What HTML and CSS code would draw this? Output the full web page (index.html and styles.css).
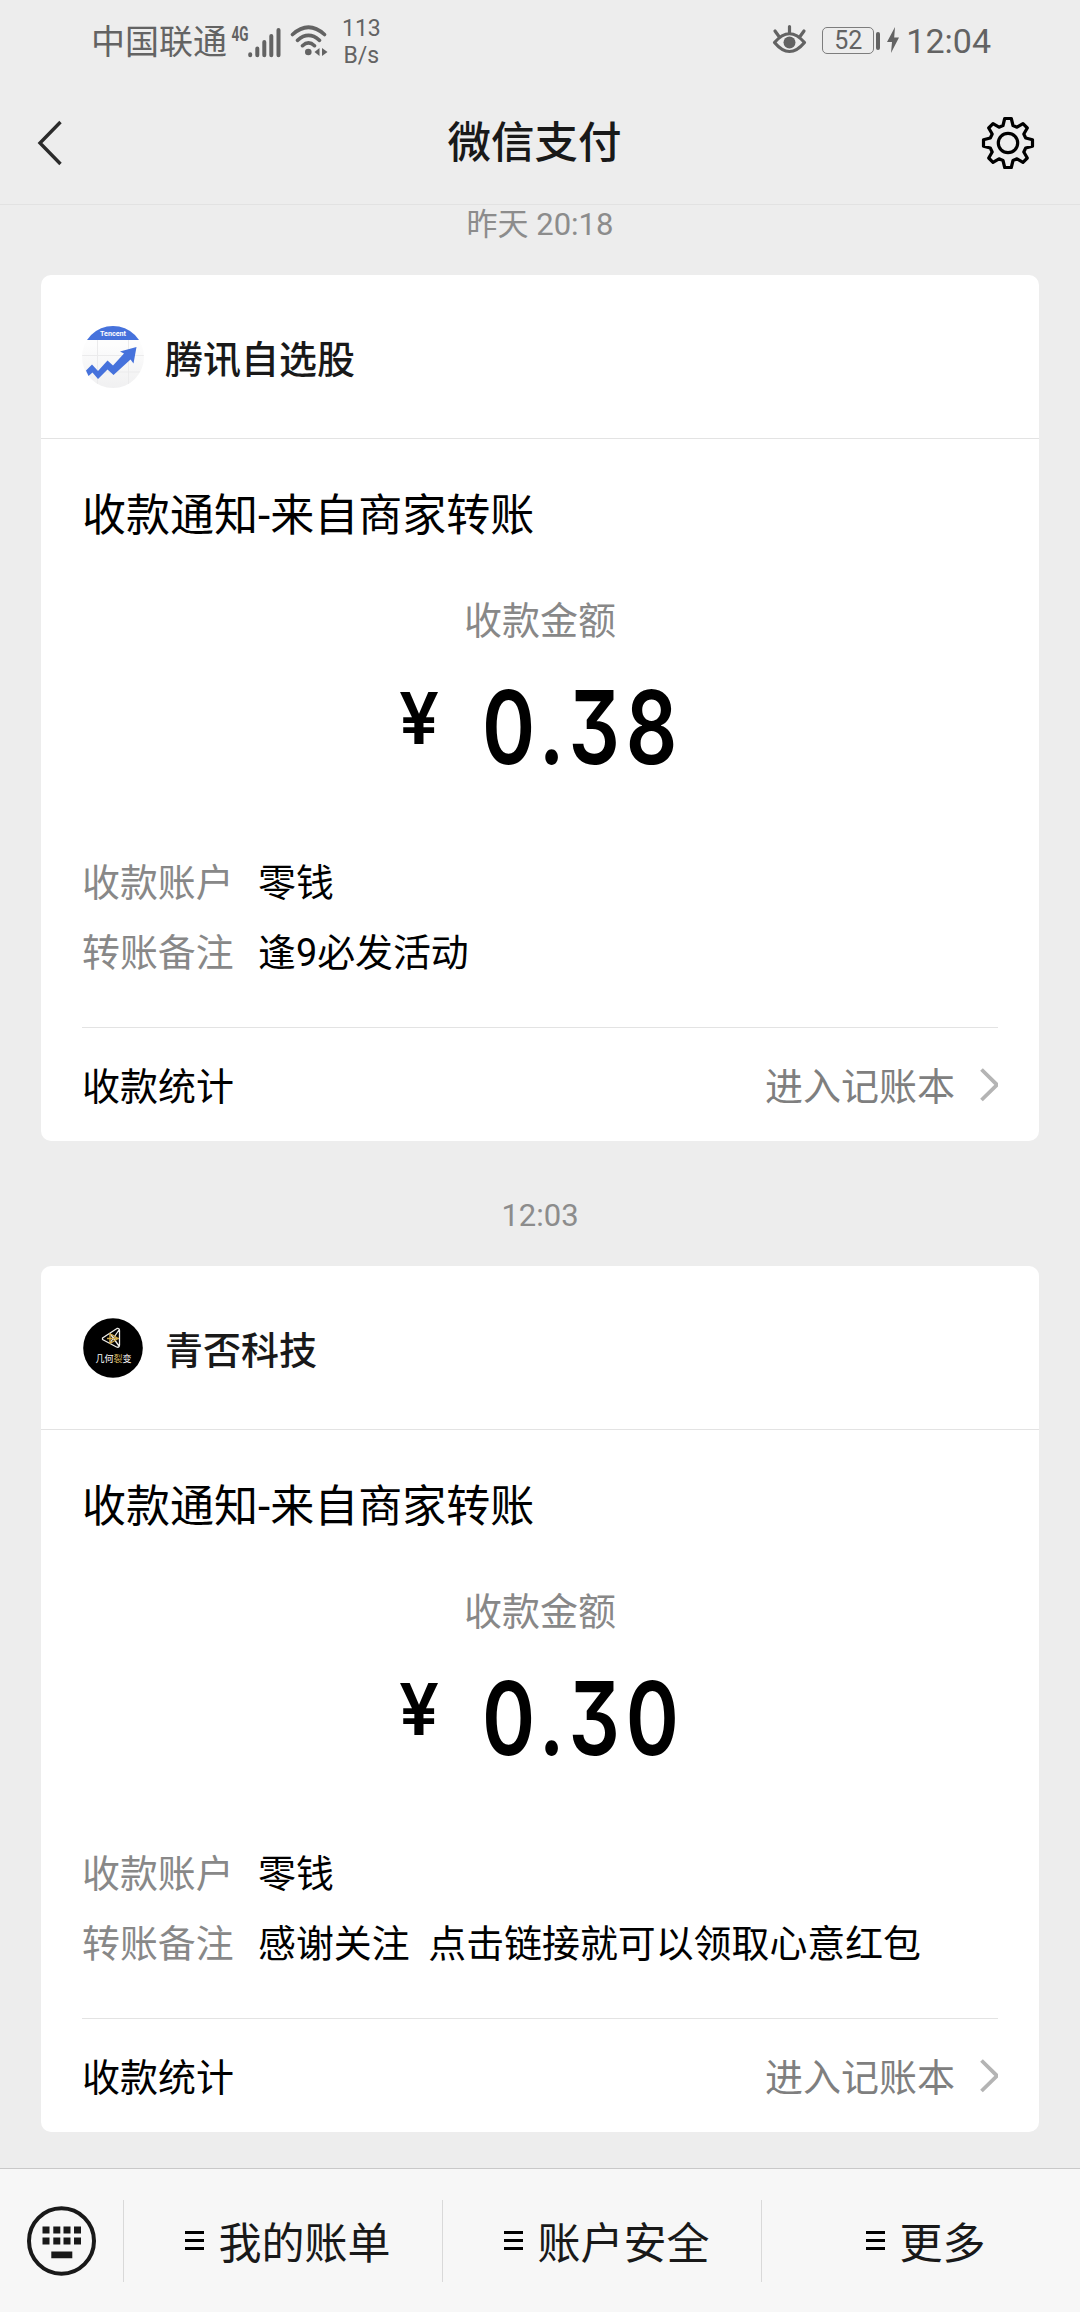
FILE: index.html
```html
<!DOCTYPE html>
<html lang="zh-CN">
<head>
<meta charset="utf-8">
<title>微信支付</title>
<link rel="stylesheet" href="styles.css">
</head>
<body>
<div class="screen">
  <div class="status">
    <span class="carrier">中国联通</span>
    <svg class="signal" width="50" height="46" viewBox="0 -6 50 46">
      <text x="0.500" y="16.500" class="net" textLength="17" lengthAdjust="spacingAndGlyphs">4G</text>
      <g stroke="#636363" stroke-width="4" stroke-linecap="round"><path d="M19.2 30.3v.9M26.3 24.5v6.7M33.3 18v13.2M40.3 12v19.2M47.5 6v25.2"/></g>
    </svg>
    <svg class="wifi" width="38" height="32" viewBox="0 0 38 32">
      <g fill="none" stroke="#636363" stroke-width="3.6" stroke-linecap="round"><path d="M2.5 9.5Q18.500-5 34.500 9.500M7.500 15.300Q18.500 5.500 29.500 15.300M12.500 20.700Q18.500 15 24.500 20.700"/></g>
      <circle cx="18.300" cy="27" r="3.300" fill="#636363"/>
      <path d="M29.500 23v8l-5-4zM32 23v8l5.500-4z" fill="#636363"/>
    </svg>
    <span class="speed">113<br>B/s</span>
    <span class="grow"></span>
    <svg class="eye" width="36" height="32" viewBox="0 0 36 32">
      <g fill="none" stroke="#636363" stroke-width="3.200" stroke-linecap="round" stroke-linejoin="round"><path d="M2.500 18.500Q17.500 1 32.500 18.500Q17.500 36.500 2.500 18.500zM17.500 2.500v6M3 7l4 5.500M32 7l-4 5.500"/></g>
      <circle cx="17.500" cy="18.500" r="6" fill="#636363"/>
    </svg>
    <span class="battery">52</span>
    <span class="tip"></span>
    <svg class="bolt" width="12" height="26" viewBox="0 0 12 26"><path d="M8 0L0 15h5L4 26 12 10.500H7.200z" fill="#636363"/></svg>
    <span class="clock">12:04</span>
  </div>
  <div class="nav">
    <svg width="26" height="46" viewBox="0 0 26 46"><path d="M23.500 2L3 23l20.500 21" fill="none" stroke="#2b2b2b" stroke-width="3.400"/></svg>
    <h1 class="nav-title">微信支付</h1>
    <svg width="56" height="56" viewBox="-28 -28 56 56" fill="none" stroke="#000" stroke-width="3.200" stroke-linejoin="round">
      <path d="M-24.500-3.300L-17.700-5L-15.800-9L-19.300-15L-15-19.300L-9-15.800L-5-17.500L-3.300-24.500H3.300L5-17.500L9-15.800L15-19.300L19.300-15L15.800-9L17.700-5L24.500-3.300V3.300L17.700 5L15.800 9L19.300 15L15 19.300L9 15.800L5 17.500L3.300 24.500H-3.300L-5 17.500L-9 15.800L-15 19.300L-19.300 15L-15.800 9L-17.700 5L-24.500 3.300z"/>
      <circle r="9.700"/>
    </svg>
  </div>

  <main class="chat">
    <div class="time">昨天 20:18</div>
    <section class="card">
      <header class="card-head">
        <svg class="avatar" width="62" height="62" viewBox="0 0 62 62">
          <defs>
            <clipPath id="disc"><circle cx="31" cy="31" r="31"/></clipPath>
            <linearGradient id="shade" x2="0" y2="1"><stop offset="0.300" stop-color="#fdfdfd"/><stop offset="1" stop-color="#f0f0f1"/></linearGradient>
          </defs>
          <g clip-path="url(#disc)">
            <rect width="62" height="62" fill="url(#shade)"/>
            <path d="M15.500 14v48M46.500 14v48M0 29.500h62M0 46h62" stroke="#ebebec"/>
            <rect width="62" height="14" fill="#4672dc"/>
            <text x="31" y="9.500" class="brand" textLength="26" lengthAdjust="spacingAndGlyphs">Tencent</text>
          </g>
          <path d="M4 44.500L10 38.500 16 45 25.500 34.500 31 39.500 42 27.500 38 25.500 54.500 21 51.500 37.500 48.500 33.500 31.500 49 25.500 43.500 16 53 10.500 46.500 6.500 50z" fill="#4672dc"/>
        </svg>
        <span class="name">腾讯自选股</span>
      </header>
      <div class="body">
        <h2 class="title">收款通知-来自商家转账</h2>
        <div class="label">收款金额</div>
        <div class="amount"><span class="yen">¥</span><span class="num">0.38</span></div>
        <dl class="rows">
          <dt>收款账户</dt><dd>零钱</dd>
          <dt>转账备注</dt><dd>逢9必发活动</dd>
        </dl>
        <footer class="foot">
          <span>收款统计</span>
          <span class="link">进入记账本</span>
          <svg width="18" height="34" viewBox="0 0 18 34"><path d="M1.500 1.500L17 16.800 1.500 32" fill="none" stroke="#b4b4b4" stroke-width="3.800"/></svg>
        </footer>
      </div>
    </section>

    <div class="time later">12:03</div>
    <section class="card">
      <header class="card-head">
        <svg class="avatar" width="62" height="62" viewBox="0 0 62 62">
          <circle cx="31" cy="31" r="29.800" fill="#000"/>
          <g fill="none" stroke="#efeeea" stroke-width="1.300" stroke-linejoin="round"><path d="M20.500 21L35 11.500Q37.500 11 37.500 13.500V28Q37.500 31 34.500 30L20.500 22.500zM28 16.500L37 29M28 26L37 13"/></g>
          <path d="M28 16v11M25 21.500h12M28 16.500l8 5-8 5" fill="none" stroke="#cfa94b" stroke-width="1.400"/>
          <text x="13.500" y="45" class="logo">几何<tspan fill="#d8b75c">裂</tspan>变</text>
        </svg>
        <span class="name">青否科技</span>
      </header>
      <div class="body">
        <h2 class="title">收款通知-来自商家转账</h2>
        <div class="label">收款金额</div>
        <div class="amount"><span class="yen">¥</span><span class="num">0.30</span></div>
        <dl class="rows">
          <dt>收款账户</dt><dd>零钱</dd>
          <dt>转账备注</dt><dd>感谢关注  点击链接就可以领取心意红包</dd>
        </dl>
        <footer class="foot">
          <span>收款统计</span>
          <span class="link">进入记账本</span>
          <svg width="18" height="34" viewBox="0 0 18 34"><path d="M1.500 1.500L17 16.800 1.500 32" fill="none" stroke="#b4b4b4" stroke-width="3.800"/></svg>
        </footer>
      </div>
    </section>
  </main>

  <nav class="bar">
    <div class="keys">
      <svg width="70" height="72" viewBox="0 0 70 72">
        <ellipse cx="34.500" cy="36" rx="32.500" ry="32.700" fill="none" stroke="#191919" stroke-width="4"/>
        <path d="M15.500 21.500h7v7h-7zM26.300 21.500h7v7h-7zM36.500 21.500h7v7h-7zM47 21.500h7v7h-7zM15.500 32.500h7v7h-7zM26.300 32.500h7v7h-7zM36.500 32.500h7v7h-7zM47 32.500h7v7h-7zM24.300 46.500h21v6.700h-21z" fill="#191919"/>
      </svg>
    </div>
    <div class="item"><i class="burger"></i>我的账单</div>
    <div class="item"><i class="burger"></i>账户安全</div>
    <div class="item"><i class="burger"></i>更多</div>
  </nav>
</div>
</body>
</html>
```
FILE: styles.css
```css
* { box-sizing: border-box; }
body {
  margin: 0;
  background: #ededed;
  font-family: Roboto, "Noto Sans CJK SC", sans-serif;
  color: #000;
}
h1, h2, dl, dd { margin: 0; font-weight: 400; }
svg { display: block; flex: none; }
.screen {
  width: 1080px;
  height: 2312px;
  display: flex;
  flex-direction: column;
  overflow: hidden;
}

/* status bar */
.status {
  height: 84px;
  padding: 0 89px 0 91px;
  display: flex;
  align-items: center;
  color: #636363;
}
.carrier { font-size: 34px; line-height: 40px; }
.signal { margin-left: 4px; margin-top: -3px; overflow: visible; }
.net { font: bold 20px Roboto, sans-serif; fill: #636363; }
.wifi { margin-left: 9px; margin-top: -3px; }
.speed { margin-left: 14px; font-size: 23px; line-height: 27px; text-align: center; }
.grow { flex: 1; }
.eye { margin-top: -4px; }
.battery {
  width: 52px;
  height: 27px;
  margin-left: 14px;
  margin-top: -3px;
  border: 1.5px solid #7d7d7d;
  border-radius: 5px;
  font-size: 25px;
  line-height: 25px;
  text-align: center;
}
.tip { width: 4px; height: 18px; margin: -3px 0 0 2px; border-radius: 2px; background: #636363; }
.bolt { margin: -4px 0 0 7px; }
.clock { margin-left: 7px; font-size: 34px; line-height: 40px; margin-top: -2px; }

/* title bar */
.nav {
  height: 121px;
  padding: 0 44px 3px 37px;
  display: flex;
  align-items: center;
  justify-content: space-between;
  border-bottom: 1px solid #e2e2e2;
}
.nav-title {
  font-size: 43.500px;
  line-height: 60px;
  font-weight: 500;
  color: #191919;
  padding: 3px 0 0 26px;
}

/* conversation */
.chat { flex: 1; padding: 0 41px; }
.time {
  font-size: 31px;
  line-height: 40px;
  text-align: center;
  color: #8c8c8c;
  margin-bottom: 30px;
}
.later { margin-top: 55px; }
.card {
  height: 866px;
  background: #fff;
  border-radius: 10px;
}
.card-head {
  height: 164px;
  padding: 51px 41px 0;
  display: flex;
  align-items: flex-start;
  border-bottom: 1px solid #e3e3e3;
}
.name {
  margin-left: 21px;
  margin-top: 4px;
  font-size: 38px;
  line-height: 60px;
  font-weight: 500;
  color: #191919;
}
.brand { font: bold 8px Roboto, sans-serif; fill: #fff; text-anchor: middle; }
.logo { font: 9px "Noto Sans CJK SC", sans-serif; fill: #fff; }
.body { padding: 47px 41px 0; }
.title { font-size: 44px; line-height: 60px; }
.label {
  margin-top: 50px;
  font-size: 38px;
  line-height: 50px;
  text-align: center;
  color: #888;
}
.amount {
  height: 141px;
  margin-top: 31px;
  display: flex;
  padding-left: 317px;
  font-family: Inter, Roboto, sans-serif;
  font-weight: 600;
}
.yen {
  width: 83px;
  font-size: 71px;
  line-height: 83px;
  transform: scaleX(1);
  transform-origin: left center;
}
.num {
  font-size: 102px;
  line-height: 100px;
  letter-spacing: 7.500px;
  font-feature-settings: "cv09";
  transform: scaleX(0.790);
  transform-origin: left center;
}
.rows {
  margin-top: 30px;
  display: grid;
  grid-template-columns: 176px 1fr;
  font-size: 37.900px;
  line-height: 70px;
  white-space: pre;
}
.rows dt { color: #888; }
.foot {
  margin-top: 39px;
  height: 114px;
  padding-top: 4px;
  border-top: 1px solid #e3e3e3;
  display: flex;
  align-items: center;
  font-size: 38px;
  line-height: 50px;
}
.link { margin-left: auto; margin-right: 25px; color: #7f7f7f; }
.foot svg { margin-top: -3px; }

/* bottom menu */
.bar {
  height: 144px;
  border-top: 1px solid #c9c9c9;
  background: #f7f7f7;
  display: grid;
  grid-template-columns: 123px 319px 319px 319px;
  align-items: center;
}
.keys { padding-left: 27px; }
.item {
  height: 82px;
  border-left: 1px solid #d9d9d9;
  display: flex;
  align-items: center;
  justify-content: center;
  gap: 15px;
  padding-top: 6px;
  padding-left: 9px;
  font-size: 43px;
  line-height: 60px;
  color: #191919;
}
.burger {
  width: 19px;
  height: 19px;
  margin-top: -6px;
  border-top: 3px solid #000;
  border-bottom: 3px solid #000;
  background: linear-gradient(#000, #000) center / 100% 3px no-repeat;
}
```
